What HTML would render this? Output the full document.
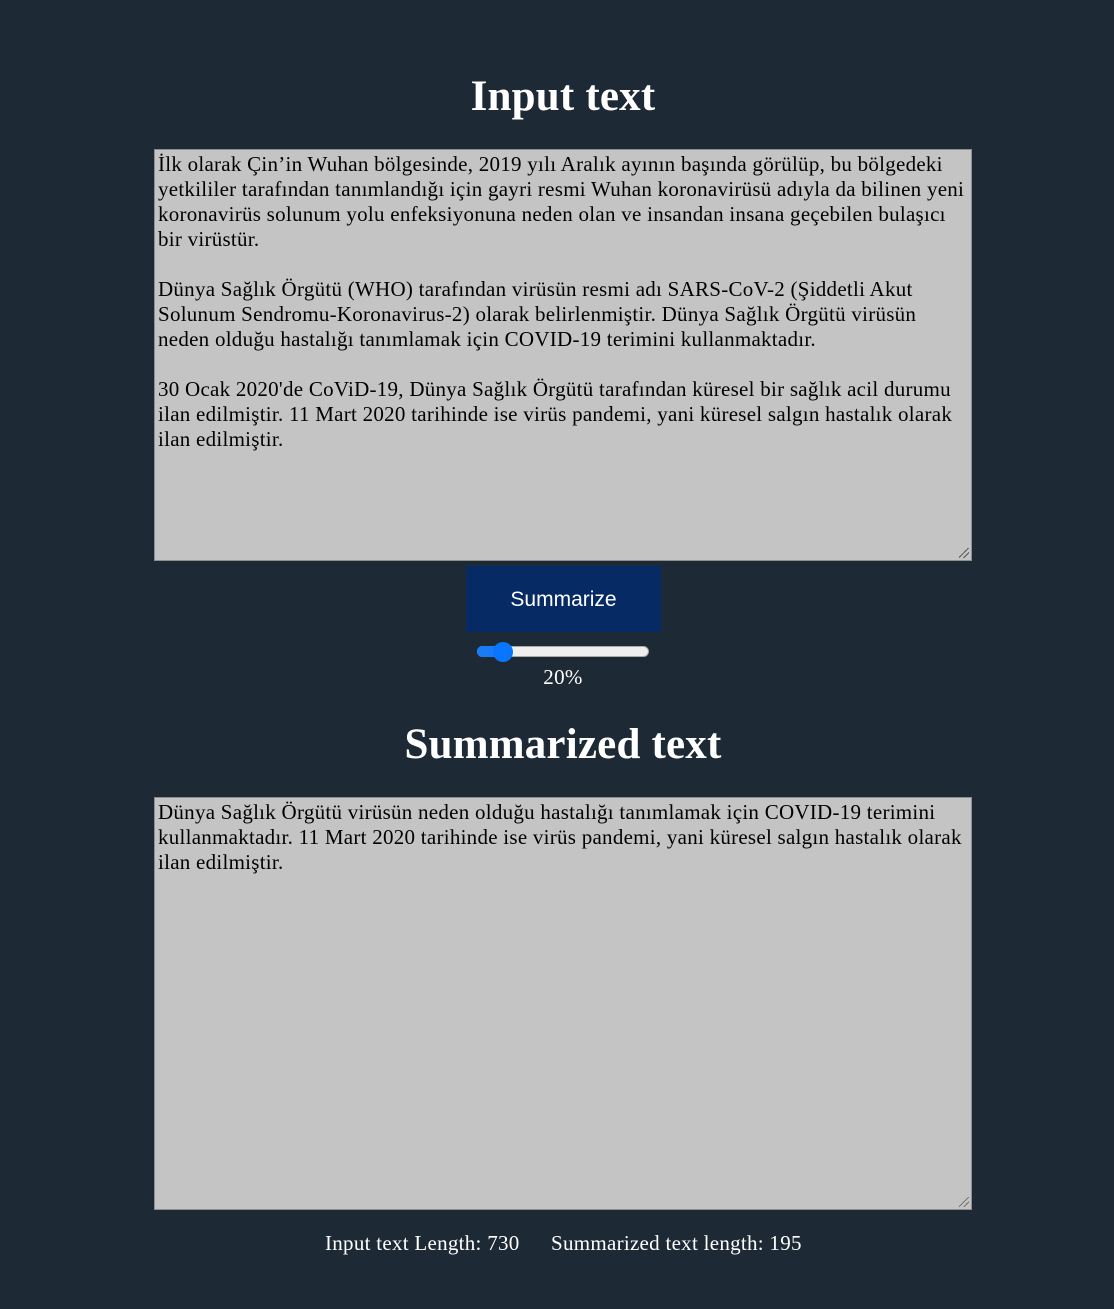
<!DOCTYPE html>
<html><head><meta charset="utf-8"><style>
html,body{margin:0;padding:0;background:#1d2935;width:1114px;height:1309px;overflow:hidden;font-family:"Liberation Serif",serif;color:#fff}
.abs{position:absolute}
h1{position:absolute;left:0;width:1126px;text-align:center;margin:0;font-size:43px;font-weight:bold;line-height:50px;letter-spacing:0.2px}
.ta{position:absolute;left:154px;background:#c4c4c4;border:1px solid #8f8f8f;color:#000;font-size:21px;line-height:25px;padding:2px 0 0 3px;white-space:pre-wrap;box-sizing:border-box;width:818px;letter-spacing:0.26px}
.grip{position:absolute;right:2px;bottom:2px;width:10px;height:10px;background:linear-gradient(135deg,transparent 45%,#555 45%,#555 52%,transparent 52%,transparent 70%,#555 70%,#555 77%,transparent 77%)}
.btn{left:466px;top:566px;width:195px;height:66px;background:#052a64;color:#fff;font-family:"Liberation Sans",sans-serif;font-size:21px;text-align:center;line-height:68px}
.track{left:477px;top:646px;width:172px;height:11px;background:#efefef;border:1px solid #aaa;border-radius:6px;box-sizing:border-box}
.fill{left:477px;top:646px;width:28px;height:11px;background:#1a7bf6;border-radius:6px 0 0 6px}
.thumb{left:493px;top:642px;width:20px;height:20px;border-radius:50%;background:#0a75ff}
.c{left:0;width:1126px;text-align:center;font-size:21px}
</style></head><body>
<h1 style="top:72px">Input text</h1>
<div class="ta" style="top:149px;height:412px">İlk olarak Çin’in Wuhan bölgesinde, 2019 yılı Aralık ayının başında görülüp, bu bölgedeki yetkililer tarafından tanımlandığı için gayri resmi Wuhan koronavirüsü adıyla da bilinen yeni koronavirüs solunum yolu enfeksiyonuna neden olan ve insandan insana geçebilen bulaşıcı bir virüstür.

Dünya Sağlık Örgütü (WHO) tarafından virüsün resmi adı SARS-CoV-2 (Şiddetli Akut Solunum Sendromu-Koronavirus-2) olarak belirlenmiştir. Dünya Sağlık Örgütü virüsün neden olduğu hastalığı tanımlamak için COVID-19 terimini kullanmaktadır.

30 Ocak 2020'de CoViD-19, Dünya Sağlık Örgütü tarafından küresel bir sağlık acil durumu ilan edilmiştir. 11 Mart 2020 tarihinde ise virüs pandemi, yani küresel salgın hastalık olarak ilan edilmiştir.<div class="grip"></div></div>
<div class="abs btn">Summarize</div>
<div class="abs track"></div><div class="abs fill"></div><div class="abs thumb"></div>
<div class="abs c" style="top:665px;letter-spacing:0.3px">20%</div>
<h1 style="top:720px">Summarized text</h1>
<div class="ta" style="top:797px;height:413px">Dünya Sağlık Örgütü virüsün neden olduğu hastalığı tanımlamak için COVID-19 terimini kullanmaktadır. 11 Mart 2020 tarihinde ise virüs pandemi, yani küresel salgın hastalık olarak ilan edilmiştir.<div class="grip"></div></div>
<div class="abs" style="left:325px;top:1231px;font-size:21px;letter-spacing:0.28px">Input text Length: 730</div>
<div class="abs" style="left:551px;top:1231px;font-size:21px;letter-spacing:0.28px">Summarized text length: 195</div>
</body></html>
